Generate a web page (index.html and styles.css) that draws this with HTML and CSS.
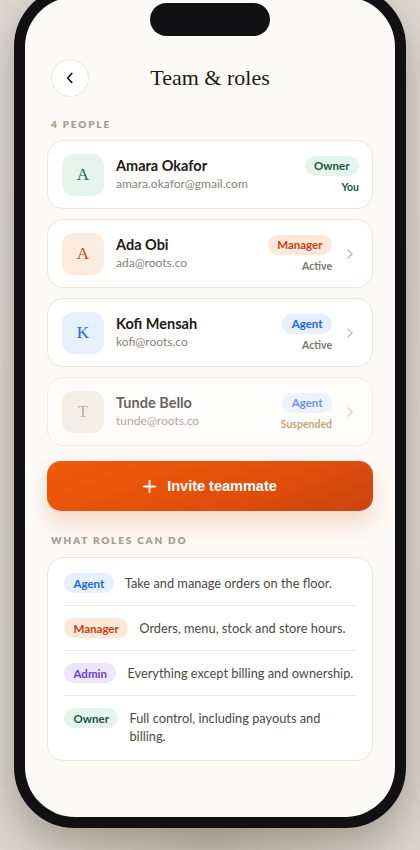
FILE: index.html
```html
<!DOCTYPE html>
<html lang="en">
<head>
<meta charset="utf-8">
<title>Team &amp; roles</title>
<link rel="stylesheet" href="styles.css">
</head>
<body>
<div class="phone">
  <div class="screen">
    <div class="island"></div>
    <header class="topbar">
      <button class="back" aria-label="Back">
        <svg width="14" height="14" viewBox="0 0 14 14"><path d="M8.8 2.5 L4.6 7 L8.8 11.5" fill="none" stroke="#1d1a17" stroke-width="1.7" stroke-linecap="round" stroke-linejoin="round"/></svg>
      </button>
      <h1 class="title">Team &amp; roles</h1>
      <span class="spacer"></span>
    </header>

    <div class="label">4 PEOPLE</div>

    <div class="members">
      <div class="member">
        <div class="avatar av-green">A</div>
        <div class="info">
          <div class="name">Amara Okafor</div>
          <div class="email">amara.okafor@gmail.com</div>
        </div>
        <div class="meta">
          <span class="badge b-owner">Owner</span>
          <span class="status st-you">You</span>
        </div>
      </div>

      <div class="member">
        <div class="avatar av-orange">A</div>
        <div class="info">
          <div class="name">Ada Obi</div>
          <div class="email">ada@roots.co</div>
        </div>
        <div class="meta">
          <span class="badge b-manager">Manager</span>
          <span class="status">Active</span>
        </div>
        <svg class="chev" width="16" height="16" viewBox="0 0 16 16"><path d="M6 4 L10 8 L6 12" fill="none" stroke="#c9c1b5" stroke-width="1.6" stroke-linecap="round" stroke-linejoin="round"/></svg>
      </div>

      <div class="member">
        <div class="avatar av-blue">K</div>
        <div class="info">
          <div class="name">Kofi Mensah</div>
          <div class="email">kofi@roots.co</div>
        </div>
        <div class="meta">
          <span class="badge b-agent">Agent</span>
          <span class="status">Active</span>
        </div>
        <svg class="chev" width="16" height="16" viewBox="0 0 16 16"><path d="M6 4 L10 8 L6 12" fill="none" stroke="#c9c1b5" stroke-width="1.6" stroke-linecap="round" stroke-linejoin="round"/></svg>
      </div>

      <div class="member muted">
        <div class="avatar av-sand">T</div>
        <div class="info">
          <div class="name">Tunde Bello</div>
          <div class="email">tunde@roots.co</div>
        </div>
        <div class="meta">
          <span class="badge b-agent">Agent</span>
          <span class="status st-susp">Suspended</span>
        </div>
        <svg class="chev" width="16" height="16" viewBox="0 0 16 16"><path d="M6 4 L10 8 L6 12" fill="none" stroke="#c9c1b5" stroke-width="1.6" stroke-linecap="round" stroke-linejoin="round"/></svg>
      </div>
    </div>

    <button class="invite">
      <svg width="13" height="13" viewBox="0 0 13 13"><path d="M6.5 0.8 V12.2 M0.8 6.5 H12.2" stroke="#fff" stroke-width="1.8" stroke-linecap="round"/></svg>
      <span>Invite teammate</span>
    </button>

    <div class="label label-roles">WHAT ROLES CAN DO</div>

    <div class="roles">
      <div class="role">
        <span class="badge b-agent">Agent</span>
        <p class="desc">Take and manage orders on the floor.</p>
      </div>
      <div class="role">
        <span class="badge b-manager">Manager</span>
        <p class="desc">Orders, menu, stock and store hours.</p>
      </div>
      <div class="role">
        <span class="badge b-admin">Admin</span>
        <p class="desc">Everything except billing and ownership.</p>
      </div>
      <div class="role">
        <span class="badge b-owner">Owner</span>
        <p class="desc">Full control, including payouts and billing.</p>
      </div>
    </div>
  </div>
</div>
</body>
</html>
```
FILE: styles.css
```css
* { box-sizing: border-box; }

html, body {
  margin: 0;
  padding: 0;
  height: 850px;
  overflow: hidden;
}

body {
  background: radial-gradient(ellipse at 50% 100%, #c9c2b6 0%, #d8d3ca 45%, #dedad2 100%);
  font-family: Lato, "Noto Sans", sans-serif;
  color: #1d1a17;
}

.phone {
  width: 392px;
  height: 842px;
  margin: -14px auto 0;
  border: 11px solid #111113;
  border-radius: 61px;
  background: #111113;
  box-shadow: 0 18px 40px rgba(70, 58, 40, 0.35);
}

.screen {
  position: relative;
  height: 100%;
  border-radius: 50px;
  background: #fcfaf7;
  overflow: hidden;
  padding: 62px 22px 0;
}

.island {
  position: absolute;
  top: 6px;
  left: 50%;
  margin-left: -60px;
  width: 120px;
  height: 33px;
  border-radius: 17px;
  background: #111113;
}

.topbar {
  display: grid;
  grid-template-columns: 38px 1fr 38px;
  align-items: center;
  padding: 0 4px;
  height: 38px;
}

.back {
  width: 38px;
  height: 38px;
  border-radius: 50%;
  border: 1px solid #efe6d8;
  background: #fff;
  display: flex;
  align-items: center;
  justify-content: center;
  padding: 0;
}

.title {
  margin: 0;
  text-align: center;
  font-family: "Liberation Serif", serif;
  font-weight: 400;
  font-size: 22px;
  line-height: 28px;
  color: #1d1a17;
}

.label {
  margin: 21px 4px 10px;
  font-size: 10px;
  line-height: 12px;
  font-weight: 800;
  letter-spacing: 1.8px;
  color: #a69e90;
}

.label-roles {
  margin-top: 23px;
  margin-bottom: 11px;
}

.members {
  display: flex;
  flex-direction: column;
  gap: 10px;
}

.member {
  display: flex;
  align-items: center;
  height: 69px;
  padding: 0 13px 0 14px;
  background: #fff;
  border: 1px solid #ede5d8;
  border-radius: 16px;
}

.member.muted {
  opacity: 0.68;
}

.avatar {
  flex: none;
  width: 42px;
  height: 42px;
  border-radius: 12px;
  display: flex;
  align-items: center;
  justify-content: center;
  font-family: "Liberation Serif", serif;
  font-size: 17px;
}

.av-green { background: #e6f4ee; color: #1b6a4c; }
.av-orange { background: #fcebdf; color: #c94616; }
.av-blue { background: #e6f0fd; color: #2867dc; }
.av-sand { background: #efe9e0; color: #9d958a; }

.info {
  flex: 1;
  min-width: 0;
  margin-left: 12px;
}

.name {
  font-size: 14.5px;
  line-height: 18px;
  font-weight: 700;
  color: #1d1a17;
}

.email {
  margin-top: 1px;
  font-size: 12px;
  line-height: 16px;
  color: #8a8279;
}

.meta {
  display: flex;
  flex-direction: column;
  align-items: flex-end;
  gap: 5px;
}

.badge {
  flex: none;
  display: inline-flex;
  align-items: center;
  height: 20px;
  padding: 0 9.5px;
  border-radius: 10px;
  font-size: 11.5px;
  font-weight: 700;
  white-space: nowrap;
}

.b-owner { background: #e5f4ec; color: #17573f; }
.b-manager { background: #fce8da; color: #c4410f; }
.b-agent { background: #e6effd; color: #1f66e0; }
.b-admin { background: #ece6fb; color: #6a3ed6; }

.status {
  font-size: 10.5px;
  line-height: 13px;
  font-weight: 700;
  color: #7a736a;
}

.st-you { color: #17573f; }
.st-susp { color: #b07d2e; }

.chev {
  flex: none;
  margin-left: 10px;
  margin-right: 1px;
}

.invite {
  margin-top: 15px;
  width: 100%;
  height: 50px;
  border: none;
  border-radius: 14px;
  background: linear-gradient(160deg, #f25a0a 0%, #e34f0b 55%, #c9440f 100%);
  box-shadow: 0 12px 24px rgba(225, 90, 25, 0.22);
  color: #fff;
  display: flex;
  align-items: center;
  justify-content: center;
  gap: 11px;
  font-family: "Liberation Sans", Arial, sans-serif;
  font-weight: 700;
  font-size: 14.5px;
  padding: 0;
}

.roles {
  background: #fff;
  border: 1px solid #ede5d8;
  border-radius: 16px;
  padding: 3px 16px;
}

.role {
  display: flex;
  align-items: flex-start;
  gap: 11px;
  padding: 12px 0;
  border-top: 1px solid #efe8dc;
}

.role:first-child {
  border-top: none;
}

.desc {
  margin: 1px 0 0;
  font-size: 12.8px;
  line-height: 18px;
  color: #4d4843;
}
```
